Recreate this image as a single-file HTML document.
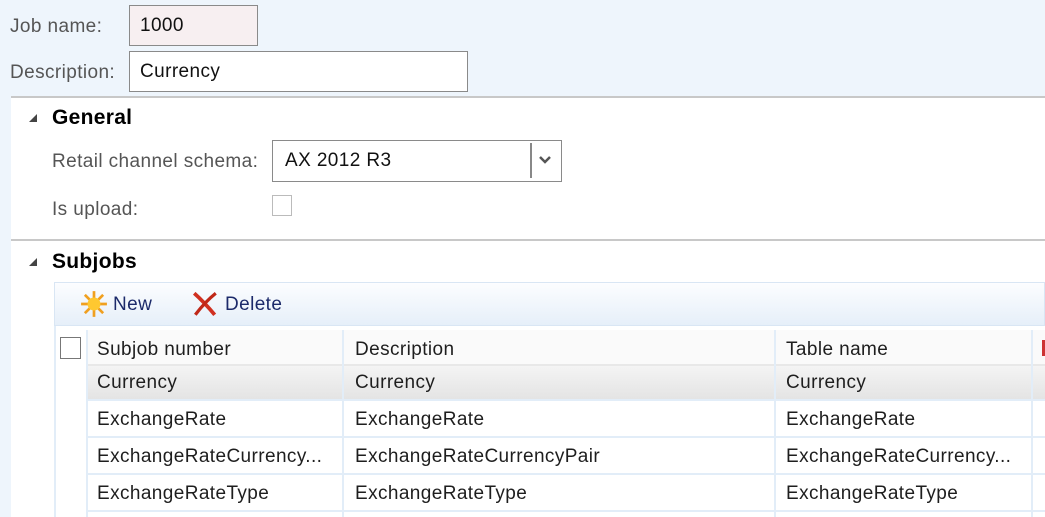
<!DOCTYPE html>
<html><head><meta charset="utf-8"><style>
*{box-sizing:border-box;margin:0;padding:0}
body{width:1045px;height:517px;overflow:hidden;background:#eef5fc;font-family:"Liberation Sans",sans-serif;font-size:19px;letter-spacing:0.4px;color:#1e1e1e;position:relative}
.a{position:absolute}
.lbl{color:#555;white-space:nowrap}
.box{border:1px solid #8a8a8a;background:#fff;padding:0 10px;line-height:40px;color:#111}
.hdr{font-weight:bold;font-size:21px;color:#000;letter-spacing:0.3px}
.tri{width:0;height:0;border-left:8px solid transparent;border-bottom:8px solid #444}
.cell{position:absolute;white-space:nowrap;padding-left:11px}
.row{position:absolute;left:86px;width:959px;border-bottom:2px solid #e2edf8}
.vl{position:absolute;width:2px;background:#e2edf8}
</style></head><body>
<div class="a lbl" style="left:10px;top:16px">Job name:</div>
<div class="a box" style="left:129px;top:5px;width:129px;height:41px;background:#f7eff1">1000</div>
<div class="a lbl" style="left:10px;top:62px">Description:</div>
<div class="a box" style="left:129px;top:51px;width:339px;height:41px">Currency</div>

<div class="a" style="left:11px;top:96px;width:1034px;height:421px;background:#fff"></div>
<div class="a" style="left:11px;top:96px;width:1034px;height:2px;background:#c8c8c8"></div>
<div class="a tri" style="left:29px;top:114px"></div>
<div class="a hdr" style="left:52px;top:106px">General</div>
<div class="a lbl" style="left:52px;top:151px">Retail channel schema:</div>
<div class="a box" style="left:272px;top:140px;width:290px;height:42px;padding-left:12px">AX 2012 R3</div>
<div class="a" style="left:530px;top:143px;width:2px;height:35px;background:#888"></div>
<svg class="a" style="left:538px;top:155px" width="14" height="10"><path d="M2 2 L7 7 L12 2" stroke="#555" stroke-width="2.5" fill="none"/></svg>
<div class="a lbl" style="left:52px;top:199px">Is upload:</div>
<div class="a" style="left:272px;top:195px;width:20px;height:21px;border:1px solid #bbb;background:#fff"></div>
<div class="a" style="left:11px;top:239px;width:1034px;height:2px;background:#c8c8c8"></div>
<div class="a tri" style="left:29px;top:258px"></div>
<div class="a hdr" style="left:52px;top:250px">Subjobs</div>

<div class="a" style="left:54px;top:282px;width:991px;height:44px;border:1px solid #d9e6f4;background:linear-gradient(#fcfdff,#e6eff9)"></div>
<svg class="a" style="left:80px;top:290px" width="28" height="28" viewBox="0 0 26 26"><g stroke="#f0a020" stroke-width="2.5"><path d="M13 1v24M1 13h24M4.5 4.5l17 17M21.5 4.5l-17 17"/></g><circle cx="13" cy="13" r="6" fill="#ffc830"/></svg>
<div class="a" style="left:113px;top:294px;color:#1c2a6a">New</div>
<svg class="a" style="left:191px;top:291px" width="28" height="26" viewBox="0 0 26 24"><path d="M3 2 Q12 10 22 22" stroke="#d03020" stroke-width="3.5" fill="none"/><path d="M23 2 Q13 10 4 22" stroke="#c02818" stroke-width="3" fill="none"/></svg>
<div class="a" style="left:225px;top:294px;color:#1c2a6a">Delete</div>

<div class="a" style="left:54px;top:326px;width:2px;height:191px;background:#e2edf8"></div>
<div class="a" style="left:60px;top:337px;width:21px;height:22px;border:1px solid #777;background:#fff"></div>
<div class="row" style="top:330px;height:36px;background:#fafafa;border-bottom:2px solid #e8e8e8"></div>
<div class="row" style="top:366px;height:35px;background:linear-gradient(#f4f4f4,#e4e4e4)"></div>
<div class="row" style="top:401px;height:37px"></div>
<div class="row" style="top:438px;height:37px"></div>
<div class="row" style="top:475px;height:37px"></div>
<div class="vl" style="left:86px;top:330px;height:187px"></div>
<div class="vl" style="left:342px;top:330px;height:187px"></div>
<div class="vl" style="left:774px;top:330px;height:187px"></div>
<div class="vl" style="left:1031px;top:330px;height:187px"></div>
<div class="a" style="left:1042px;top:340px;width:3px;height:16px;background:#c33"></div>

<div class="cell" style="left:86px;top:339px">Subjob number</div>
<div class="cell" style="left:344px;top:339px">Description</div>
<div class="cell" style="left:775px;top:339px">Table name</div>
<div class="cell" style="left:86px;top:372px">Currency</div>
<div class="cell" style="left:344px;top:372px">Currency</div>
<div class="cell" style="left:775px;top:372px">Currency</div>
<div class="cell" style="left:86px;top:409px">ExchangeRate</div>
<div class="cell" style="left:344px;top:409px">ExchangeRate</div>
<div class="cell" style="left:775px;top:409px">ExchangeRate</div>
<div class="cell" style="left:86px;top:446px">ExchangeRateCurrency...</div>
<div class="cell" style="left:344px;top:446px">ExchangeRateCurrencyPair</div>
<div class="cell" style="left:775px;top:446px">ExchangeRateCurrency...</div>
<div class="cell" style="left:86px;top:483px">ExchangeRateType</div>
<div class="cell" style="left:344px;top:483px">ExchangeRateType</div>
<div class="cell" style="left:775px;top:483px">ExchangeRateType</div>
</body></html>
